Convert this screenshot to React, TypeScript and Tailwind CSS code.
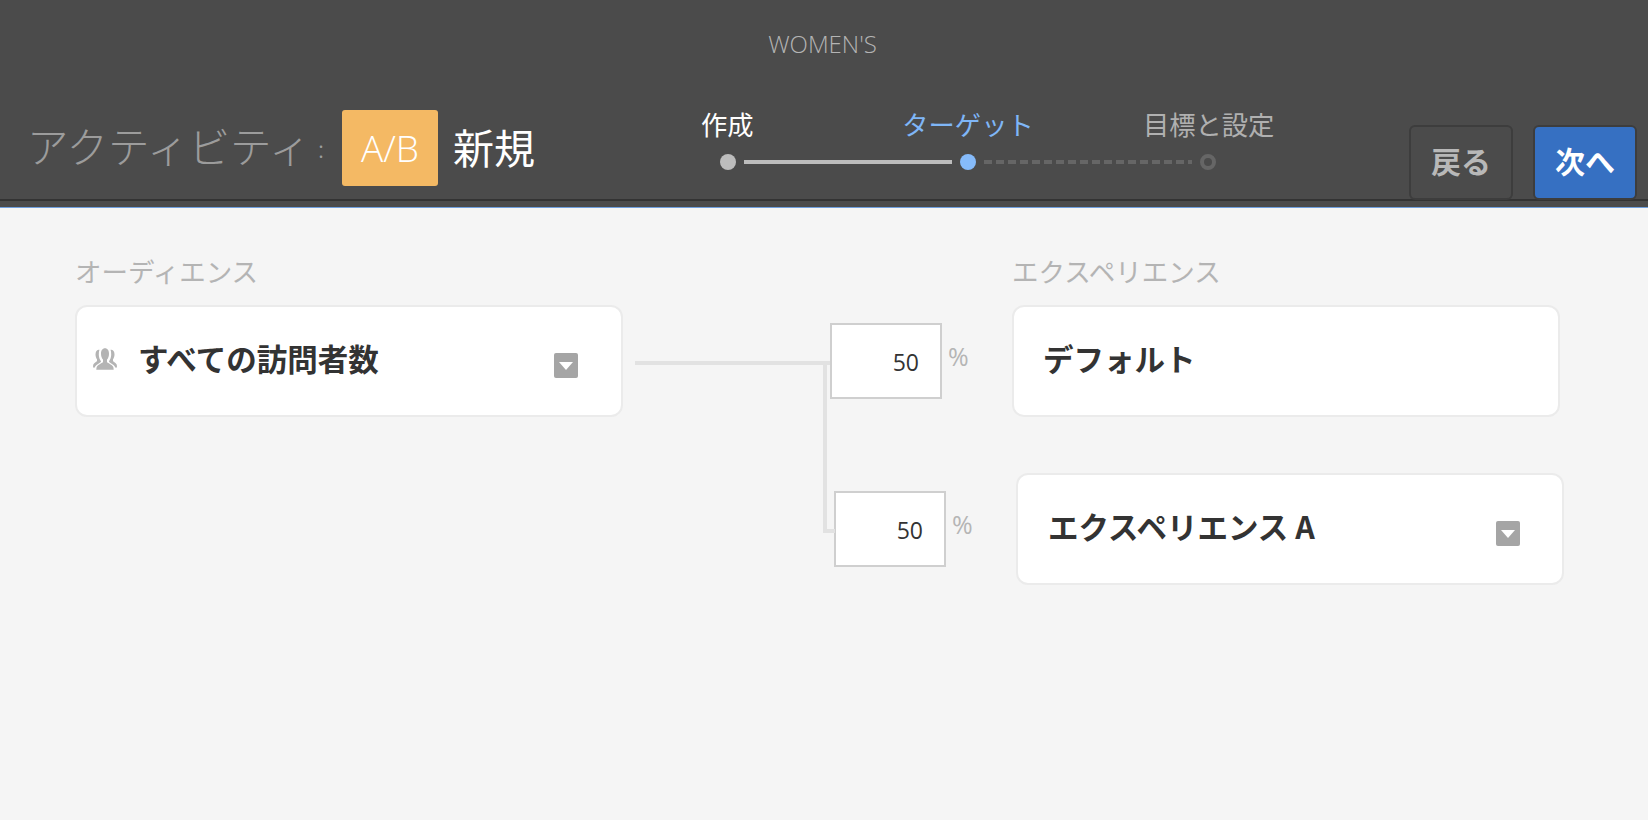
const font = "font-['Noto_Sans_CJK_JP','Noto_Sans',sans-serif]";

const Caret = () => (
  <span className="mt-[9px] flex h-[25px] w-[24px] shrink-0 items-center justify-center rounded-[2px] bg-[#a5a5a5]">
    <svg width="14" height="8" viewBox="0 0 14 8">
      <path d="M0 0h14L7 8z" fill="#fff" />
    </svg>
  </span>
);

const People = () => (
  <svg className="mb-[4px]" width="24" height="24" viewBox="0 0 24 21" preserveAspectRatio="none" fill="#b4b4b4">
    <path d="M12 1c2.600 0 4 2 4 4.800 0 2.300-1 4.200-2 5.200v2c0 1 4 2 6 4 .6.600.7 3 .7 3H3.300s.1-2.400.7-3c2-2 6-3 6-4v-2c-1-1-2-2.900-2-5.200C8 3 9.400 1 12 1z" />
    <path d="M5.500 2.500c-2 .2-3 1.900-3 4 0 1.800.8 3.300 1.500 4.200v1.500c-.5.900-3 1.600-3.800 3.300L0 18h1.800c.5-1.500 1.800-2.600 4.700-4 .9-.4 1.500-.8 1.500-1.500-1.400-1.700-2.200-3.800-2.200-6 0-1.500.2-2.900.7-4z" />
    <path d="M18.500 2.500c2 .2 3 1.900 3 4 0 1.800-.8 3.300-1.500 4.200v1.500c.5.900 3 1.600 3.800 3.300L24 18h-1.800c-.5-1.500-1.800-2.600-4.700-4-.9-.4-1.500-.8-1.500-1.500 1.400-1.700 2.200-3.800 2.200-6 0-1.500-.2-2.900-.7-4z" />
  </svg>
);

const Percent = ({ value }: { value: number }) => (
  <div className="mt-[18px] flex w-[182px] shrink-0 items-start">
    <div className="flex h-[76px] w-[112px] items-center justify-end border-2 border-[#cfcfcf] bg-white pr-[21px] pt-[2px] font-['Open_Sans',sans-serif] text-[23px] text-[#333]">
      {value}
    </div>
    <span className="ml-[6px] mt-[18px] font-['Open_Sans',sans-serif] text-[25px] leading-[30px] text-[#b5b5b5]">%</span>
  </div>
);

const Step = ({ label, color }: { label: string; color: string }) => (
  <div className={`w-[241px] text-center text-[26.300px] leading-[36px] ${color}`}>{label}</div>
);

export default function App() {
  return (
    <div className={`${font} h-[820px] w-[1648px] overflow-hidden bg-[#f5f5f5]`}>
      <header className="h-[208px] border-b border-[#6f9fde] bg-[#4b4b4b]">
        <div className="h-[201px] border-b-2 border-[#333]">
          <div className="pr-[3px] pt-[27px] text-center font-['Open_Sans',sans-serif] text-[24px] font-light leading-[34px] text-[#b4b4b4]">WOMEN'S</div>
          <div className="mt-[49px] flex items-start">
            <div className="flex w-[606px] shrink-0 items-center pl-[27px]">
              <span className="w-[291px] pb-[6px] text-[41.500px] font-light leading-[70px] text-[#9c9c9c]">アクティビティ</span>
              <span className="w-[24px] text-[24px] font-light text-[#9c9c9c]">:</span>
              <span className="flex h-[76px] w-[96px] items-center justify-center rounded-[3px] bg-[#f4b964] font-['Open_Sans',sans-serif] text-[37px] font-light text-white">A/B</span>
              <span className="ml-[15px] pb-[4px] text-[41px] leading-none text-white">新規</span>
            </div>
            <div className="-mt-[4px] w-[723px] shrink-0">
              <div className="flex pl-[1px]">
                <Step label="作成" color="text-white" />
                <Step label="ターゲット" color="text-[#7fb6f7]" />
                <Step label="目標と設定" color="text-[#b0b0b0]" />
              </div>
              <div className="ml-[114px] mt-[12px] flex items-center">
                <span className="h-[16px] w-[16px] rounded-full bg-[#bdbdbd]" />
                <span className="mx-[8px] h-[4px] w-[208px] bg-[#bdbdbd]" />
                <span className="h-[16px] w-[16px] rounded-full bg-[#86bbfa]" />
                <span className="mx-[8px] h-[4px] w-[208px] bg-[repeating-linear-gradient(90deg,#666_0,#666_8px,transparent_8px,transparent_12px)]" />
                <span className="h-[16px] w-[16px] rounded-full border-[4px] border-[#666]" />
              </div>
            </div>
            <div className="ml-[80px] mt-[15px] flex gap-[20px]">
              <button className="h-[75px] w-[104px] rounded-[6px] border-2 border-[#3d3d3d] bg-[#4b4b4b] pb-[4px] text-[30px] font-bold text-[#b8b8b8]">戻る</button>
              <button className="h-[75px] w-[104px] rounded-[6px] border-2 border-[#3d3d3d] bg-[#3670c2] pb-[4px] text-[30px] font-bold text-white">次へ</button>
            </div>
          </div>
        </div>
      </header>

      <main className="pl-[75px] pt-[45px]">
        <div className="flex text-[26.500px] leading-[36px] text-[#b4b4b4]">
          <div className="w-[937px]">オーディエンス</div>
          <div>エクスペリエンス</div>
        </div>

        <div className="mt-[16px] flex items-start">
          <div className="flex h-[112px] w-[548px] shrink-0 items-center justify-between rounded-[12px] border-2 border-[#ebebeb] bg-white pl-[16px] pr-[43px]">
            <div className="flex items-center">
              <People />
              <span className="ml-[21px] pb-[6px] text-[30.500px] font-bold leading-none text-[#333]">すべての訪問者数</span>
            </div>
            <Caret />
          </div>
          <span className="ml-[12px] mt-[56px] h-[4px] w-[195px] shrink-0 bg-[#e2e2e2]" />
          <Percent value={50} />
          <div className="flex h-[112px] w-[548px] shrink-0 items-center rounded-[12px] border-2 border-[#ebebeb] bg-white pl-[29px]">
            <span className="pb-[6px] text-[30.500px] font-bold leading-none text-[#333]">デフォルト</span>
          </div>
        </div>

        <div className="relative mt-[56px] flex items-start pl-[759px]">
          <span className="absolute left-[748px] top-[-112px] h-[172px] w-[4px] bg-[#e2e2e2]" />
          <span className="absolute left-[748px] top-[56px] h-[4px] w-[12px] bg-[#e2e2e2]" />
          <Percent value={50} />
          <div className="flex h-[112px] w-[548px] shrink-0 items-center justify-between rounded-[12px] border-2 border-[#ebebeb] bg-white pl-[30px] pr-[42px]">
            <span className="pb-[6px] text-[30.500px] font-bold leading-none text-[#333]">エクスペリエンス A</span>
            <Caret />
          </div>
        </div>
      </main>
    </div>
  );
}
